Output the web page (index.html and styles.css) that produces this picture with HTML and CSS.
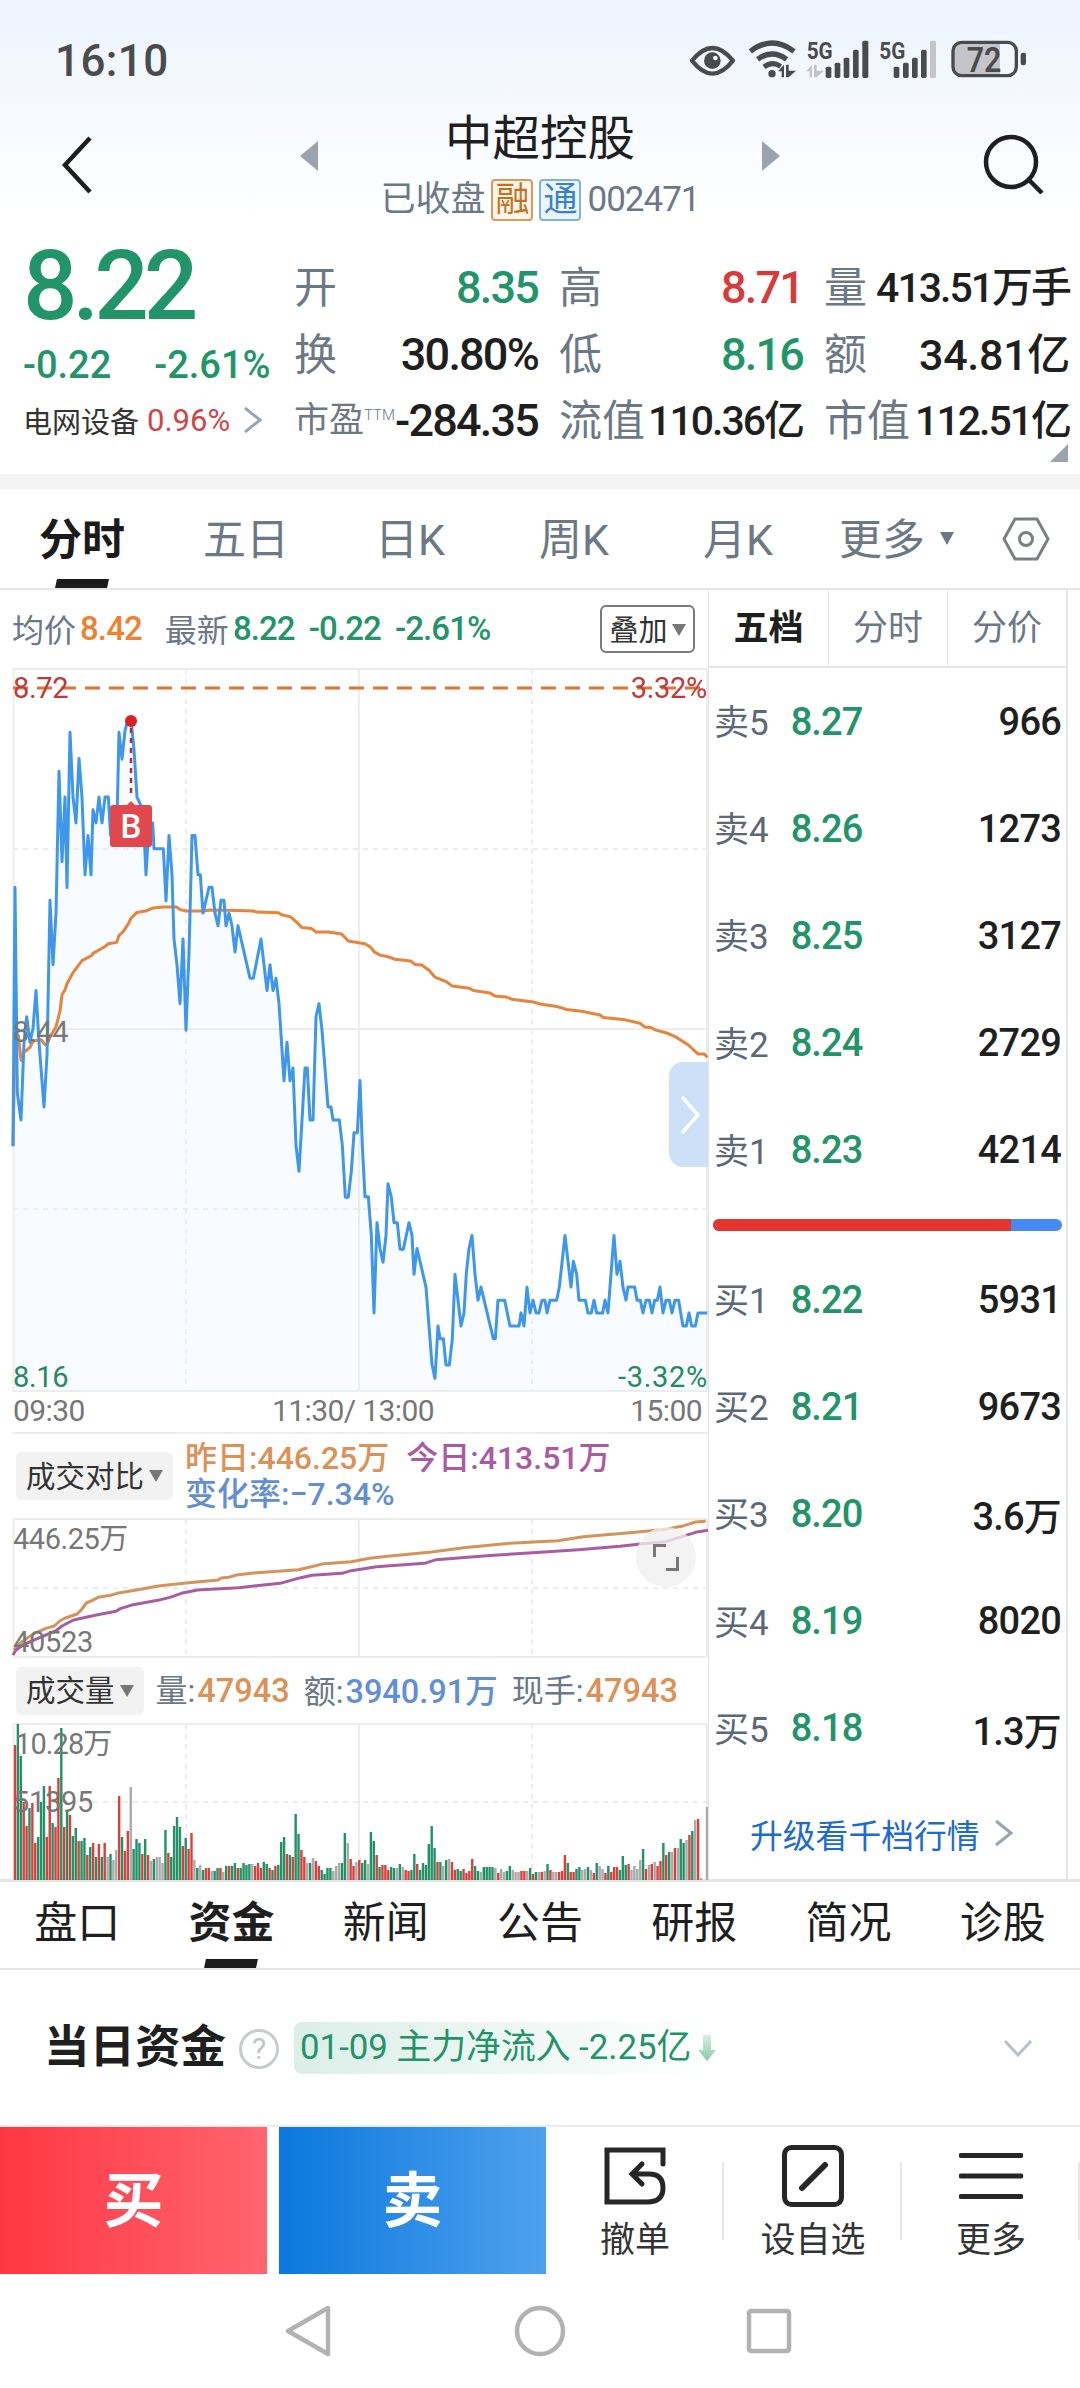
FILE: index.html
```html
<!DOCTYPE html>
<html lang="zh-CN">
<head>
    <meta charset="UTF-8">
    <meta name="viewport" content="width=device-width, initial-scale=1.0">
    <title>中超控股 002471</title>
    <link rel="stylesheet" href="styles.css">
</head>
<body>
    <div class="top">
        <div class="status-bar">
            <span class="time">16:10</span>
            <svg class="status-icons" viewBox="0 0 1110 180">
                <g fill="none" stroke="#4a4b4d" stroke-width="13">
                    <path d="M36 110 Q97 34 159 110 Q97 188 36 110 Z" stroke-linejoin="round"/>
                    <path d="M211 82 Q276 32 342 82" stroke-width="16"/>
                    <path d="M233 106 Q276 74 320 106" stroke-width="16"/>
                    <path d="M252 129 Q276 110 302 127" stroke-width="15"/>
                </g>
                <g fill="#4a4b4d">
                    <circle cx="97" cy="110" r="25"/>
                    <circle cx="276" cy="149" r="11"/>
                    <path d="M294 142 L312 122 V160 H305 V142 Z M318 122 H326 V140 H348 L326 160 H318 Z"/>
                    <text x="380" y="105" font-size="74" font-weight="700" textLength="78" lengthAdjust="spacingAndGlyphs">5G</text>
                    <text x="598" y="105" font-size="74" font-weight="700" textLength="78" lengthAdjust="spacingAndGlyphs">5G</text>
                    <rect x="437" y="128" width="17" height="34" rx="5"/>
                    <rect x="464" y="116" width="17" height="46" rx="5"/>
                    <rect x="491" y="101" width="17" height="61" rx="5"/>
                    <rect x="519" y="77" width="17" height="85" rx="5"/>
                    <rect x="547" y="50" width="18" height="112" rx="5"/>
                    <rect x="641" y="128" width="17" height="34" rx="5"/>
                    <rect x="669" y="116" width="17" height="46" rx="5"/>
                    <rect x="696" y="101" width="17" height="61" rx="5"/>
                    <rect x="723" y="77" width="17" height="85" rx="5"/>
                    <rect x="1022" y="86" width="16" height="38" rx="7"/>
                </g>
                <circle cx="106" cy="102" r="7" fill="#f5f9ff"/>
                <g fill="#c3c5ca">
                    <path d="M378 142 L396 122 V160 H389 V142 Z M402 122 H410 V140 H432 L410 160 H402 Z"/>
                    <rect x="750" y="50" width="18" height="112" rx="5"/>
                    <path d="M845 56 H960 V154 H845 Q820 154 820 130 V80 Q820 56 845 56 Z"/>
                </g>
                <rect x="819" y="55" width="190" height="100" rx="26" fill="none" stroke="#4a4b4d" stroke-width="10"/>
                <text x="860" y="143" font-size="103" font-weight="600" fill="#4a4b4d" textLength="104" lengthAdjust="spacingAndGlyphs">72</text>
            </svg>
        </div>

        <div class="header">
            <svg class="back" viewBox="0 0 32 58"><path d="M29 2 L4 29 L29 56"/></svg>
            <svg class="arrow" viewBox="0 0 18 30"><path d="M18 0 V30 L0 15 Z"/></svg>
            <div class="title">
                <h1>中超控股</h1>
                <div class="subtitle">
                    <span>已收盘</span>
                    <span class="badge orange">融</span>
                    <span class="badge blue">通</span>
                    <span class="code">002471</span>
                </div>
            </div>
            <svg class="arrow" viewBox="0 0 18 30"><path d="M0 0 V30 L18 15 Z"/></svg>
            <svg class="search" viewBox="0 0 62 60"><circle cx="28" cy="28" r="25"/><path d="M46 46 L59 59"/></svg>
        </div>

        <div class="quote">
            <div class="quote-main">
                <div class="price">8.22</div>
                <div class="change"><span>-0.22</span><span>-2.61%</span></div>
                <div class="sector">
                    <span>电网设备</span><span class="sector-rate">0.96%</span>
                    <svg viewBox="0 0 20 26"><path d="M2 1 L17 13 L2 25"/></svg>
                </div>
            </div>
            <div class="quote-grid">
                <div class="cell"><span class="label">开</span><span class="value green">8.35</span></div>
                <div class="cell"><span class="label">高</span><span class="value red">8.71</span></div>
                <div class="cell"><span class="label">量</span><span class="value small">413.51万手</span></div>
                <div class="cell"><span class="label">换</span><span class="value">30.80%</span></div>
                <div class="cell"><span class="label">低</span><span class="value green">8.16</span></div>
                <div class="cell"><span class="label">额</span><span class="value mid">34.81亿</span></div>
                <div class="cell"><span class="label pe">市盈<sup>TTM</sup></span><span class="value">-284.35</span></div>
                <div class="cell"><span class="label">流值</span><span class="value small">110.36亿</span></div>
                <div class="cell"><span class="label">市值</span><span class="value small">112.51亿</span></div>
            </div>
            <div class="corner"></div>
        </div>
    </div>

    <div class="period-tabs">
        <div class="tab active">分时</div>
        <div class="tab">五日</div>
        <div class="tab">日K</div>
        <div class="tab">周K</div>
        <div class="tab">月K</div>
        <div class="tab more">更多<i class="caret"></i></div>
        <svg class="settings" viewBox="0 0 48 44"><path d="M13 2 H35 L46 22 L35 42 H13 L2 22 Z"/><circle cx="24" cy="22" r="6.5"/></svg>
    </div>

    <div class="main">
        <div class="charts">
            <div class="info-row">
                <span class="gray">均价</span><span class="num orange-text">8.42</span>
                <span class="gray latest">最新</span><span class="num green">8.22</span>
                <span class="num green delta">-0.22</span><span class="num green delta">-2.61%</span>
                <span class="overlay-btn">叠加<i class="caret"></i></span>
            </div>

            <div class="chart-wrap">
                <svg class="chart-price" viewBox="12 668 696 724">
                    <g transform="translate(0 660) scale(.33333 .34435)">
                        <path id="price-area" fill="#f8fbff"/>
                    </g>
                    <g class="grid">
                        <path d="M13 669 H707 M13 1029 H707 M13 1391 H707 M13.5 668 V1391 M359 668 V1391 M707 668 V1391"/>
                        <path class="dash" d="M186 669 V1391 M532 669 V1391 M13 849 H707 M13 1209 H707"/>
                    </g>
                    <path class="limit" d="M13 688 H707"/>
                    <g class="curves" transform="translate(0 660) scale(.33333 .34435)">
                        <polyline id="avg-line" stroke="#e8833a"/>
                        <polyline id="price-line" stroke="#3e97ea"/>
                    </g>
                    <g class="axis">
                        <text x="13" y="698" fill="#c0393b">8.72</text>
                        <text x="707" y="698" fill="#c0393b" text-anchor="end">3.32%</text>
                        <text x="13" y="1042">8.44</text>
                        <text x="13" y="1387" fill="#258a60">8.16</text>
                        <text x="618" y="1387" fill="#258a60" textLength="89">-3.32%</text>
                    </g>
                    <path d="M131 728 V797" stroke="#b32a36" stroke-width="2.5" stroke-dasharray="5 5"/>
                    <circle cx="131" cy="721" r="6" fill="#dd1f24"/>
                    <path d="M126 806 L131 801 L136 806 Z" fill="#e1484d"/>
                    <rect x="110" y="805" width="42" height="42" rx="3" fill="#e1484d"/>
                    <text class="buy-mark" x="131" y="838" text-anchor="middle">B</text>
                </svg>
                <div class="expand">
                    <svg viewBox="0 0 20 40"><path d="M2 2 L18 20 L2 38"/></svg>
                </div>
            </div>
            <div class="times"><span>09:30</span><span>11:30/ 13:00</span><span>15:00</span></div>

            <div class="indicator tall">
                <span class="picker">成交对比<i class="caret"></i></span>
                <div class="compare">
                    <span class="yesterday">昨日:446.25万</span><span class="today">今日:413.51万</span>
                    <span class="rate">变化率:−7.34%</span>
                </div>
            </div>
            <div class="chart-wrap">
                <svg class="chart-compare" viewBox="12 1518 696 140">
                    <g class="grid">
                        <path d="M13 1519 H707 M13 1657 H707 M13.5 1519 V1657 M359 1519 V1657 M707 1519 V1657"/>
                        <path class="dash" d="M186 1519 V1657 M532 1519 V1657 M13 1588 H707"/>
                    </g>
                    <g class="curves" transform="translate(0 1360) scale(.45914 .33333)">
                        <polyline stroke="#d4935a" points="30,870 45,848 60,833 75,820 100,805 118,798 130,783 142,774 168,762 178,748 188,729 200,722 214,712 240,706 255,700 300,689 345,678 400,670 475,660 482,654 498,652 515,645 560,638 650,629 685,618 705,611 765,605 805,595 850,588 940,576 1010,563 1110,550 1215,542 1270,530 1390,516 1450,508 1490,497 1515,486 1537,484"/>
                        <polyline stroke="#a95ca2" points="28,885 35,870 50,855 75,840 122,812 135,798 160,780 210,765 252,754 262,746 290,734 350,719 370,712 395,700 430,690 520,683 610,670 655,653 680,646 745,640 765,632 820,620 925,610 950,599 1060,587 1160,578 1260,569 1350,559 1400,551 1450,545 1485,530 1515,517 1542,511"/>
                    </g>
                    <g class="axis">
                        <text x="13" y="1549" textLength="115">446.25万</text>
                        <text x="13" y="1652">40523</text>
                    </g>
                    <circle cx="666" cy="1557" r="30" fill="#f0f0f0" fill-opacity=".8"/>
                    <path d="M654.5 1557 V1545.5 H666 M666 1569.5 H677.5 V1557" fill="none" stroke="#777" stroke-width="3"/>
                </svg>
            </div>

            <div class="indicator">
                <span class="picker">成交量<i class="caret"></i></span>
                <div class="volume-info">
                    <span>量:<b class="c-orange">47943</b></span>
                    <span>额:<b class="c-blue">3940.91万</b></span>
                    <span>现手:<b class="c-orange">47943</b></span>
                </div>
            </div>
            <svg class="chart-volume" viewBox="12 1723 696 157">
                <g class="grid">
                    <path d="M13 1724 H707 M13.5 1724 V1880 M359 1724 V1880 M707 1724 V1880"/>
                    <path class="dash" d="M186 1724 V1880 M532 1724 V1880 M13 1802 H707"/>
                </g>
                <g id="volume-bars"></g>
                <g class="axis">
                    <text x="15" y="1754" textLength="97">10.28万</text>
                    <text x="13" y="1812">51395</text>
                </g>
            </svg>
        </div>

        <div class="book">
            <div class="book-tabs"><span class="active">五档</span><span>分时</span><span>分价</span></div>
            <div class="orders">
                <div class="order"><span>卖5</span><b>8.27</b><em>966</em></div>
                <div class="order"><span>卖4</span><b>8.26</b><em>1273</em></div>
                <div class="order"><span>卖3</span><b>8.25</b><em>3127</em></div>
                <div class="order"><span>卖2</span><b>8.24</b><em>2729</em></div>
                <div class="order"><span>卖1</span><b>8.23</b><em>4214</em></div>
            </div>
            <div class="ratio"><div class="ratio-buy" style="width: 85.3%"></div></div>
            <div class="orders">
                <div class="order"><span>买1</span><b>8.22</b><em>5931</em></div>
                <div class="order"><span>买2</span><b>8.21</b><em>9673</em></div>
                <div class="order"><span>买3</span><b>8.20</b><em>3.6万</em></div>
                <div class="order"><span>买4</span><b>8.19</b><em>8020</em></div>
                <div class="order"><span>买5</span><b>8.18</b><em>1.3万</em></div>
            </div>
            <div class="upgrade">升级看千档行情
                <svg viewBox="0 0 20 28"><path d="M2 2 L17 14 L2 26"/></svg>
            </div>
        </div>
    </div>

    <div class="info-tabs">
        <div class="tab">盘口</div>
        <div class="tab active">资金</div>
        <div class="tab">新闻</div>
        <div class="tab">公告</div>
        <div class="tab">研报</div>
        <div class="tab">简况</div>
        <div class="tab">诊股</div>
    </div>

    <div class="funds">
        <h2>当日资金</h2>
        <span class="help">?</span>
        <div class="flow-tag">
            <span>01-09 主力净流入 -2.25亿</span>
            <svg viewBox="0 0 18 26">
                <defs><linearGradient id="down" x2="0" y2="1"><stop offset="0" stop-color="#d8f0e4"/><stop offset="1" stop-color="#86cba9"/></linearGradient></defs>
                <path d="M5 0 H13 V15 H18 L9 26 L0 15 H5 Z" fill="url(#down)"/>
            </svg>
        </div>
        <svg class="fold" viewBox="0 0 30 18"><path d="M2 2 L15 16 L28 2"/></svg>
    </div>

    <div class="actions">
        <div class="trade buy">买</div>
        <div class="trade sell">卖</div>
        <div class="action">
            <svg viewBox="0 0 64 64"><path d="M60 20 V6 H4 V58 H44 Q60 58 60 44 Q60 30 46 30 H30 M39 20 L29 30 L39 40"/></svg>
            <span>撤单</span>
        </div>
        <div class="action">
            <svg viewBox="0 0 64 64"><rect x="3.5" y="3.5" width="57" height="57" rx="7"/><path d="M21 44 L44 21" stroke-width="6"/></svg>
            <span>设自选</span>
        </div>
        <div class="action">
            <svg viewBox="0 0 64 64"><path d="M2 11.5 H62 M2 32 H62 M2 52.5 H62"/></svg>
            <span>更多</span>
        </div>
    </div>

    <div class="nav-bar">
        <svg viewBox="0 0 52 52"><path d="M44 3 V49 L4 26 Z"/></svg>
        <svg viewBox="0 0 52 52"><circle cx="26" cy="26" r="23"/></svg>
        <svg viewBox="0 0 52 52"><rect x="6" y="6" width="40" height="40" rx="2"/></svg>
    </div>

    <script src="chart.js"></script>
</body>
</html>
```
FILE: styles.css
```css
:root {
    --green: #22946a;
    --red: #d83a3c;
    --gray: #6c7886;
    --dark: #1f1f1f;
    --line: #e5e5e5;
}

* {
    margin: 0;
    padding: 0;
    box-sizing: border-box;
}

body {
    width: 1080px;
    height: 2388px;
    overflow: hidden;
    font-family: Roboto, "Noto Sans CJK SC", sans-serif;
    color: var(--dark);
    background: #fff;
    white-space: nowrap;
}

svg {
    display: block;
    flex-shrink: 0;
}

.green {
    color: var(--green);
}

.red {
    color: var(--red);
}

.caret {
    display: inline-block;
    margin-top: 5px;
    border: 7px solid transparent;
    border-top: 12px solid #777;
    border-bottom: 0;
}

/* status bar and title */
.top {
    height: 489px;
    border-bottom: 15px solid #f4f4f4;
    background: linear-gradient(#edf4fe, #fff 225px);
}

.status-bar {
    display: flex;
    justify-content: space-between;
    height: 108px;
    padding: 24px 30px 0 55px;
}

.time {
    font-size: 44px;
    line-height: 74px;
    font-weight: 500;
    letter-spacing: 0.4px;
    color: #4a4b4d;
}

.status-icons {
    width: 370px;
    height: 60px;
}

.header {
    display: flex;
    height: 122px;
    padding: 0 34px 0 61px;
}

.header svg {
    fill: none;
    stroke: var(--dark);
    stroke-width: 4.5;
}

.back {
    width: 32px;
    height: 58px;
    margin: 28px 207px 0 0;
}

.header .arrow {
    width: 18px;
    height: 30px;
    margin-top: 33px;
    fill: #9aa3ae;
    stroke: none;
}

.title {
    width: 444px;
    text-align: center;
}

h1 {
    font-size: 47.5px;
    line-height: 62px;
    font-weight: 400;
}

.subtitle {
    display: flex;
    justify-content: center;
    align-items: center;
    gap: 6px;
    height: 42px;
    margin-top: 9px;
    font-size: 35px;
    line-height: 40px;
    color: var(--gray);
}

.badge {
    width: 42px;
    height: 42px;
    border: 2px solid;
    border-radius: 4px;
    font-size: 34px;
    line-height: 37px;
}

.badge.orange {
    color: #c4711f;
    border-color: #d99a5c;
    background: #fff6ea;
}

.badge.blue {
    color: #3b82c4;
    border-color: #7fb2df;
    background: #eaf5ff;
}

.code {
    letter-spacing: -1px;
}

.search {
    width: 62px;
    height: 60px;
    margin: 26px 0 0 203px;
}

/* quote */
.quote {
    position: relative;
    display: flex;
    height: 244px;
}

.quote-main {
    width: 294px;
    padding-left: 23px;
}

.price {
    height: 104px;
    font-size: 96px;
    line-height: 112px;
    font-weight: 500;
    letter-spacing: -5px;
    color: var(--green);
}

.change {
    display: flex;
    gap: 43px;
    height: 60px;
    font-size: 38px;
    line-height: 62px;
    font-weight: 500;
    color: var(--green);
}

.sector {
    display: flex;
    align-items: center;
    height: 52px;
    font-size: 29px;
    color: #333;
}

.sector-rate {
    margin: 0 13px 0 8px;
    font-size: 31px;
    color: #d04548;
}

.sector svg {
    width: 20px;
    height: 26px;
    fill: none;
    stroke: #9aa3ae;
    stroke-width: 3;
}

.quote-grid {
    display: grid;
    grid-template-columns: 244px 244px 246px;
    grid-auto-rows: 66.5px;
    column-gap: 21px;
    padding-top: 25px;
}

.cell {
    display: flex;
    justify-content: space-between;
    align-items: center;
    height: 66px;
}

.label {
    font-size: 43px;
    line-height: 60px;
    color: var(--gray);
}

.label.pe {
    font-size: 35px;
}

.label sup {
    font-size: 15px;
    font-weight: 300;
    vertical-align: 12px;
    line-height: 1;
}

.value {
    font-size: 45px;
    line-height: 60px;
    font-weight: 500;
    letter-spacing: -1.8px;
}

.value.mid {
    font-size: 43px;
    letter-spacing: -0.3px;
}

.value.small {
    font-size: 41px;
    letter-spacing: -2px;
}

.corner {
    position: absolute;
    right: 12px;
    bottom: 12px;
    border-left: 18px solid transparent;
    border-bottom: 18px solid #9aa3ae;
}

/* period tabs */
.period-tabs {
    display: flex;
    height: 101px;
    border-bottom: 2px solid var(--line);
}

.tab {
    position: relative;
    display: flex;
    justify-content: center;
    align-items: center;
    width: 164px;
    padding-bottom: 6px;
    font-size: 43px;
    color: var(--gray);
}

.tab.active {
    color: #1b1b1b;
    font-weight: 700;
}

.tab.active::after {
    content: "";
    position: absolute;
    bottom: 0;
    width: 52px;
    height: 9px;
    background: #1b1b1b;
    transform: skewX(-12deg);
}

.tab.more {
    width: 154px;
    justify-content: flex-end;
    gap: 15px;
    padding-right: 20px;
}

.tab .caret {
    border-top-color: var(--gray);
    border-top-width: 13px;
}

.settings {
    width: 48px;
    height: 44px;
    margin: 28px 0 0 28px;
    fill: none;
    stroke: #7b7f84;
    stroke-width: 3;
}

/* main */
.main {
    display: flex;
    height: 1292px;
    padding-left: 12px;
    border-bottom: 3px solid var(--line);
}

.charts {
    width: 697px;
    border-right: 1.5px solid var(--line);
}

.info-row {
    display: flex;
    align-items: center;
    height: 78px;
    padding-bottom: 2px;
    font-size: 32px;
}

.gray {
    color: var(--gray);
}

.num {
    margin-left: 4px;
    font-size: 33px;
    font-weight: 500;
    letter-spacing: -0.9px;
}

.latest {
    margin-left: 23px;
}

.delta {
    margin-left: 14px;
}

.orange-text {
    color: #ee8130;
}

.overlay-btn {
    display: flex;
    align-items: center;
    justify-content: center;
    gap: 4px;
    width: 95px;
    height: 48px;
    margin: 2px 13px 0 auto;
    padding-bottom: 3px;
    border: 2px solid #7b7b7b;
    border-radius: 6px;
    font-size: 29px;
    color: #333;
}

.chart-wrap {
    position: relative;
}

.chart-price {
    width: 696px;
    height: 724px;
    overflow: visible;
}

.grid path {
    fill: none;
    stroke: #ededed;
    stroke-width: 2;
}

.grid .dash {
    stroke-dasharray: 5 5;
}

.limit {
    stroke: #dd7433;
    stroke-width: 3;
    stroke-dasharray: 15 9;
}

.curves polyline {
    fill: none;
    stroke-width: 3;
    stroke-linejoin: round;
    vector-effect: non-scaling-stroke;
}

.axis {
    font-size: 29px;
    letter-spacing: -0.3px;
    fill: #777;
}

.buy-mark {
    font-size: 33px;
    font-weight: 500;
    fill: #fff;
}

.expand {
    position: absolute;
    top: 394px;
    right: 0;
    width: 39px;
    height: 105px;
    padding: 33px 0 0 11px;
    border-radius: 14px 0 0 14px;
    background: rgba(198, 222, 246, 0.9);
}

.expand svg {
    width: 20px;
    height: 40px;
    fill: none;
    stroke: #fff;
    stroke-width: 3.5;
}

.times {
    display: grid;
    grid-template-columns: 240px 200px 1fr;
    height: 42px;
    padding: 0 6px 0 1px;
    border-bottom: 2px solid #eee;
    font-size: 30px;
    line-height: 37px;
    letter-spacing: -0.6px;
    text-align: center;
    color: #777;
}

.times span:first-child {
    text-align: left;
}

.times span:last-child {
    text-align: right;
}

.indicator {
    display: flex;
    align-items: center;
    height: 65px;
    padding-left: 4px;
    font-size: 32px;
    color: var(--gray);
}

.indicator.tall {
    height: 84px;
}

.picker {
    display: flex;
    align-items: center;
    gap: 5px;
    height: 48px;
    padding: 0 10px 5px;
    border-radius: 6px;
    background: #f2f2f2;
    font-size: 29.5px;
    color: #333;
}

.compare {
    margin-left: 12px;
    width: 440px;
    line-height: 36px;
    font-weight: 500;
    white-space: normal;
}

.yesterday,
.c-orange {
    color: #dc9157;
}

.yesterday {
    margin-right: 17px;
}

.today {
    color: #ab5aa2;
}

.rate,
.c-blue {
    color: #628fd4;
}

.chart-compare {
    width: 696px;
    height: 140px;
}

.volume-info {
    display: flex;
    gap: 14px;
    margin: -4px 0 0 12px;
}

.volume-info b {
    margin-left: 2px;
    font-size: 32.5px;
    font-weight: 500;
}

.chart-volume {
    width: 696px;
    height: 157px;
}

/* order book */
.book {
    width: 359px;
    border-right: 2px solid var(--line);
}

.book-tabs {
    display: grid;
    grid-template-columns: repeat(3, 1fr);
    height: 78px;
    border-bottom: 2px solid var(--line);
    font-size: 35px;
    line-height: 78px;
    text-align: center;
    color: var(--gray);
}

.book-tabs span + span {
    border-left: 1.5px solid var(--line);
}

.book-tabs .active {
    font-weight: 700;
    color: var(--dark);
}

.order {
    display: flex;
    align-items: center;
    height: 107.2px;
    padding: 0 5px 0 5px;
    font-size: 35px;
    color: #5d6876;
}

.order span {
    padding-bottom: 4px;
}

.order b {
    margin-left: 22px;
    font-size: 38px;
    font-weight: 500;
    letter-spacing: -0.9px;
    color: var(--green);
}

.order em {
    margin-left: auto;
    font-size: 38px;
    font-style: normal;
    font-weight: 500;
    letter-spacing: -0.8px;
    color: var(--dark);
}

.ratio {
    height: 12px;
    margin: 15px 4px;
    border-radius: 6px;
    overflow: hidden;
    background: #448bf5;
}

.ratio-buy {
    height: 12px;
    background: #e53531;
}

.upgrade {
    display: flex;
    align-items: center;
    gap: 14px;
    height: 103px;
    padding-left: 41px;
    font-size: 32.8px;
    color: #1c6bd0;
}

.upgrade svg {
    width: 20px;
    height: 28px;
    fill: none;
    stroke: #9aa3ae;
    stroke-width: 3;
}

/* info tabs */
.info-tabs {
    display: flex;
    height: 88px;
    border-bottom: 2px solid var(--line);
}

.info-tabs .tab {
    flex: 1;
    padding-bottom: 12px;
    color: var(--dark);
}

/* funds */
.funds {
    display: flex;
    align-items: center;
    height: 155px;
    padding-left: 44px;
}

h2 {
    padding-bottom: 10px;
    font-size: 45.5px;
    font-weight: 700;
}

.help {
    width: 40px;
    height: 40px;
    margin: 2px 15px 0 13px;
    border: 3px solid #c8ccd1;
    border-radius: 50%;
    font-size: 30px;
    line-height: 34px;
    text-align: center;
    color: #bfc4ca;
}

.flow-tag {
    display: flex;
    align-items: center;
    gap: 7px;
    width: 424px;
    height: 52px;
    padding-left: 6px;
    border-radius: 8px;
    background: linear-gradient(90deg, #dceee8, #fff);
    font-size: 34.8px;
    color: var(--green);
}

.flow-tag span {
    padding-bottom: 7px;
}

.flow-tag svg {
    width: 18px;
    height: 26px;
}

.fold {
    width: 30px;
    height: 18px;
    margin-left: 285px;
    fill: none;
    stroke: #b9c0c8;
    stroke-width: 3;
}

/* bottom actions */
.actions {
    display: flex;
    height: 149px;
    border-top: 2px solid #ededed;
}

.trade {
    width: 267px;
    font-size: 60px;
    line-height: 150px;
    font-weight: 700;
    text-align: center;
    color: #fff;
}

.buy {
    margin-right: 12px;
    background: linear-gradient(90deg, #ff3743, #ff656f);
}

.sell {
    background: linear-gradient(90deg, #0b78dd, #4fa1ee);
}

.action {
    position: relative;
    display: flex;
    flex-direction: column;
    align-items: center;
    width: 178px;
    padding-top: 17px;
    font-size: 35px;
    color: #333;
}

.action::after {
    content: "";
    position: absolute;
    right: 0;
    top: 35px;
    width: 2px;
    height: 78px;
    background: #e6e6e6;
}

.action svg {
    width: 64px;
    height: 64px;
    fill: none;
    stroke: #262626;
    stroke-width: 5;
    stroke-linecap: round;
}

.action span {
    margin-top: 9px;
    line-height: 48px;
}

.nav-bar {
    display: flex;
    justify-content: space-between;
    align-items: center;
    height: 114px;
    padding: 0 285px 0 284px;
}

.nav-bar svg {
    width: 52px;
    height: 52px;
    fill: none;
    stroke: #b2b2b2;
    stroke-width: 4.5;
    stroke-linejoin: round;
}
```
FILE: chart.js
```js
const price = `39,1412 45,660 52,1258 63,1336 72,1110 80,1036 90,1110 99,1070 108,960 117,1110 132,1298 141,1147
150,698 159,885 168,735 177,323 186,586 195,398 201,661 210,210 219,398 228,473 237,286 246,398 255,624 264,510
273,624 279,435 288,473 297,398 306,473 315,398 325,398 332,510 350,510 357,210 366,288 375,205 384,172 393,172
402,260 411,398 429,435 438,624 447,473 458,473 462,548 490,548 498,700 507,510 516,624 522,810 531,885 540,998
549,810 558,1075 567,848 576,510 585,510 594,624 601,624 609,735 618,698 627,660 636,660 645,735 654,772 663,698
672,698 678,772 687,735 696,772 705,848 714,772 750,924 760,924 768,885 783,810 801,960 810,885 819,960 828,924
837,998 852,1222 861,1110 870,1222 879,1185 888,1410 897,1485 906,1336 915,1185 922,1185 930,1336 939,1336
948,1036 957,998 966,1075 984,1298 993,1298 999,1336 1018,1336 1027,1410 1036,1560 1045,1560 1054,1485 1062,1373
1072,1373 1080,1221 1087,1411 1095,1559 1105,1559 1114,1671 1122,1896 1131,1634 1140,1709 1149,1749 1158,1671
1164,1521 1174,1559 1182,1634 1192,1634 1200,1711 1210,1711 1227,1634 1236,1671 1242,1784 1251,1709 1278,1821
1287,1934 1296,2046 1305,2086 1314,1934 1320,1971 1330,1971 1338,2047 1348,2047 1357,1971 1365,1784 1383,1934
1392,1896 1399,1781 1407,1709 1416,1671 1425,1784 1434,1859 1443,1821 1480,1971 1486,1971 1494,1859 1514,1859
1530,1934 1557,1934 1563,1896 1572,1934 1581,1821 1590,1896 1599,1859 1608,1896 1617,1896 1626,1859 1635,1859
1641,1896 1650,1859 1670,1859 1678,1821 1695,1671 1713,1821 1720,1746 1730,1784 1737,1859 1756,1859 1764,1896
1774,1896 1782,1859 1790,1896 1808,1896 1815,1859 1824,1896 1842,1671 1851,1784 1860,1746 1869,1821 1878,1859
1884,1821 1904,1821 1911,1859 1921,1859 1929,1896 1938,1859 1948,1859 1956,1896 1964,1859 1972,1859 1980,1821
1989,1896 1998,1859 2008,1859 2016,1896 2025,1859 2036,1859 2042,1896 2049,1934 2059,1934 2067,1896 2075,1934
2086,1934 2094,1896 2122,1896`;

const average = `39,1412 45,1100 55,1090 63,1162 72,1138 80,1133 90,1125 99,1107 108,1105 124,1103 135,1117 141,1117
150,1095 168,1065 180,1020 186,972 195,958 201,940 219,908 246,873 275,858 279,852 315,832 325,824 350,820 357,800
370,788 384,768 393,750 411,733 440,728 460,720 490,717 530,717 540,725 560,729 610,729 630,726 680,727 760,729
770,732 835,734 845,740 872,746 888,760 906,777 935,780 948,790 985,790 1025,796 1045,816 1080,822 1095,824
1112,834 1122,847 1140,857 1165,862 1185,869 1232,874 1245,884 1265,886 1287,901 1305,921 1340,935 1357,947
1408,953 1420,960 1470,967 1485,976 1520,979 1535,985 1600,993 1620,999 1670,1006 1700,1015 1745,1020 1800,1031
1810,1038 1875,1045 1920,1055 1935,1066 1953,1067 1965,1074 2000,1083 2030,1096 2065,1118 2094,1144 2113,1144
2122,1154`;

document.getElementById('price-line').setAttribute('points', price);
document.getElementById('avg-line').setAttribute('points', average);
document.getElementById('price-area').setAttribute('d', 'M39,2123 L' + price + ' L2122,2123 Z');

// one bar per minute: color key + height, morning then afternoon
const morning = `r135 g156 g124 r78 r54 g72 r77 r37 g43 g78 g94 r43 r94 g57 r53 r102 g152 r53 g69 r65 g44 g52 r39 g39
g42 r25 g33 r37 g23 r36 g23 r37 a23 g26 a20 a30 r84 g43 r29 r49 a93 g31 g41 g37 r26 g41 r25 a19 g21 a23 a23 a17 g50
r27 g23 g54 g63 g53 r34 g42 r31 r47 a20 g12 a15 g10 r12 r12 a9 g9 g12 r12 a8 g14 r14 g14 g17 r12 g12 g17 g15 g16
a16 r14 r17 r12 g18 g16 r12 g10 r14 g15 g38 g43 r26 g25 r23 g66 g46 r30 r23 a17 g17 a22 r19 r14 g10 g6 g12 g12 a9
a14 a17 g17 g47 a37 r21 r14 a18 r20`;
const afternoon = `g17 g20 a16 g48 g39 r25 g13 r15 r15 r10 g13 g12 a12 g16 a13 r10 r9 g10 g26 r16 g10 g17 g15 g36 g54
g32 r18 g18 a14 g20 a21 r18 r10 g11 g9 r11 r7 r9 r21 g14 g9 a8 g13 g13 g13 g13 a12 r7 a11 a8 g9 g14 a10 a8 a8 r9 r9
a9 g12 r6 g8 a8 r8 a9 g16 r10 a8 a8 r8 r9 r25 g17 r8 r8 g11 g13 a10 a11 g13 a10 r7 g17 a14 a11 r7 g14 r8 r13 r13
g10 g24 g15 r16 a10 a14 a11 a20 g31 r11 a15 r16 a18 r14 r19 g37 r25 g28 a28 r32 a32 g41 g37 a40 r45 g49 a60 r61 a2`;
const colors = { r: '#d93f3c', g: '#1f9266', a: '#aaa' };

function drawBars(data, from, to) {
    const bars = data.split(/\s+/);
    const step = (to - from) / Math.max(bars.length - 1, 1);
    return bars.map((bar, i) => {
        const h = +bar.slice(1);
        return `<rect x="${(from + i * step - 1.2).toFixed(2)}" y="${1880 - h}" width="2.4" height="${h}" fill="${colors[bar[0]]}"/>`;
    }).join('');
}

document.getElementById('volume-bars').innerHTML =
    drawBars(morning, 15, 359.3) + drawBars(afternoon, 362.2, 701) + drawBars('a73', 707, 707);
```
